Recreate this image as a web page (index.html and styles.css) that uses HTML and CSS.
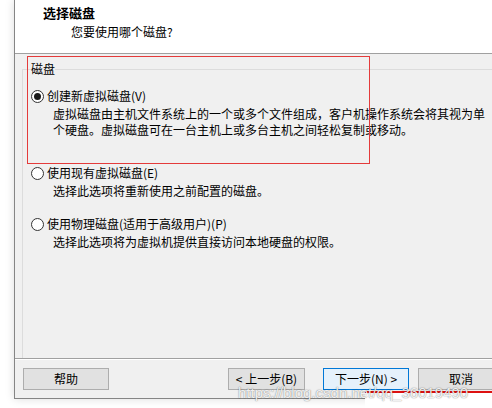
FILE: index.html
```html
<!DOCTYPE html>
<html lang="zh-CN">
<head>
<meta charset="utf-8">
<title>选择磁盘</title>
<link rel="stylesheet" href="styles.css">
</head>
<body>
<div class="stage">
  <div class="window">
    <div class="header">
      <div class="title">选择磁盘</div>
      <div class="subtitle">您要使用哪个磁盘?</div>
    </div>
    <div class="content">
      <fieldset class="group">
        <legend class="legend">磁盘</legend>
        <div class="option opt1">
          <div class="row"><span class="radio checked"></span><span>创建新虚拟磁盘(V)</span></div>
          <div class="desc">虚拟磁盘由主机文件系统上的一个或多个文件组成，客户机操作系统会将其视为单<br>个硬盘。虚拟磁盘可在一台主机上或多台主机之间轻松复制或移动。</div>
        </div>
        <div class="option opt2">
          <div class="row"><span class="radio"></span><span>使用现有虚拟磁盘(E)</span></div>
          <div class="desc">选择此选项将重新使用之前配置的磁盘。</div>
        </div>
        <div class="option opt3">
          <div class="row"><span class="radio"></span><span>使用物理磁盘(适用于高级用户)(P)</span></div>
          <div class="desc">选择此选项将为虚拟机提供直接访问本地硬盘的权限。</div>
        </div>
      </fieldset>
    </div>
    <div class="footer">
      <button class="btn help">帮助</button>
      <button class="btn back">&lt; 上一步(B)</button>
      <button class="btn next">下一步(N) &gt;</button>
      <button class="btn cancel">取消</button>
    </div>
  </div>
  <div class="highlight"></div>
  <div class="cover"></div>
  <div class="watermark">https://blog.csdn.net/qq_36019490</div>
</div>
</body>
</html>
```
FILE: styles.css
```css
html, body {
  margin: 0;
  padding: 0;
  background: #ffffff;
  overflow: hidden;
}
body {
  width: 492px;
  height: 408px;
  font-family: "Noto Sans CJK SC", "Noto Sans", sans-serif;
  font-size: 12px;
  color: #000;
}
.stage {
  position: relative;
  width: 492px;
  height: 408px;
  overflow: hidden;
}
.window {
  margin-left: 14px;
  width: 540px;
  height: 399px;
  box-sizing: border-box;
  border-left: 1px solid #858585;
  border-bottom: 1px solid #858585;
  background: #f0f0f0;
  box-shadow: 0 0 9px rgba(0, 0, 0, 0.14);
  display: flex;
  flex-direction: column;
}
.header {
  height: 53px;
  background: #ffffff;
  border-bottom: 1px solid #a0a0a0;
  padding-top: 5px;
  box-sizing: content-box;
  height: 48px;
}
.title {
  font-weight: bold;
  font-size: 13px;
  line-height: 16px;
  padding-left: 28px;
}
.subtitle {
  line-height: 16px;
  margin-top: 3px;
  padding-left: 56px;
}
.content {
  height: 304px;
  border-bottom: 1px solid #a0a0a0;
  box-shadow: 0 1px 0 #ffffff;
  overflow: hidden;
}
.group {
  margin: 7px 0 0 7px;
  padding: 0 0 0 8px;
  border: 1px solid #dcdcdc;
  border-right: 0;
  border-bottom: 0;
  height: 300px;
  min-width: 0;
}
.legend {
  padding: 0;
  line-height: 16px;
}
.option {
  white-space: nowrap;
}
.opt1 { margin-top: 11px; }
.opt2 { margin-top: 27px; }
.opt3 { margin-top: 17px; }
.row {
  display: flex;
  align-items: center;
  line-height: 16px;
}
.radio {
  width: 13px;
  height: 13px;
  box-sizing: border-box;
  border: 1px solid #333333;
  border-radius: 50%;
  background: #ffffff;
  margin-right: 3px;
  position: relative;
  flex: none;
}
.radio.checked::after {
  content: "";
  position: absolute;
  left: 2px;
  top: 2px;
  width: 7px;
  height: 7px;
  border-radius: 50%;
  background: #1a1a1a;
}
.desc {
  margin-top: 2px;
  padding-left: 22px;
  line-height: 16px;
}
.footer {
  display: flex;
  align-items: flex-start;
  padding: 9px 0 0 8px;
}
.btn {
  height: 22px;
  box-sizing: border-box;
  border: 1px solid #adadad;
  background: #e1e1e1;
  font-family: "Noto Sans CJK SC", "Noto Sans", sans-serif;
  font-size: 12px;
  color: #000;
  padding: 0;
  line-height: 18px;
}
.help { width: 86px; }
.back { width: 77px; margin-left: 119px; }
.next {
  width: 86px;
  margin-left: 18px;
  border-color: #0078d7;
  background: #e5f1fb;
}
.cancel { width: 86px; margin-left: 9px; }
.highlight {
  position: absolute;
  left: 27px;
  top: 56px;
  width: 343px;
  height: 108px;
  box-sizing: border-box;
  border: 1px solid #e43b3b;
}
.cover {
  position: absolute;
  left: 365px;
  top: 391px;
  right: 0;
  bottom: 0;
  border-top: 2px solid #dd1111;
  background: #ffffff;
}
.watermark {
  position: absolute;
  left: 238px;
  top: 384px;
  font-family: "Liberation Sans", Arial, sans-serif;
  font-size: 15px;
  line-height: 18px;
  color: rgba(255, 255, 255, 0.9);
  text-shadow: 0 0 1px rgba(0, 0, 0, 0.45), 0 0 2px rgba(0, 0, 0, 0.2);
  white-space: nowrap;
}
```
